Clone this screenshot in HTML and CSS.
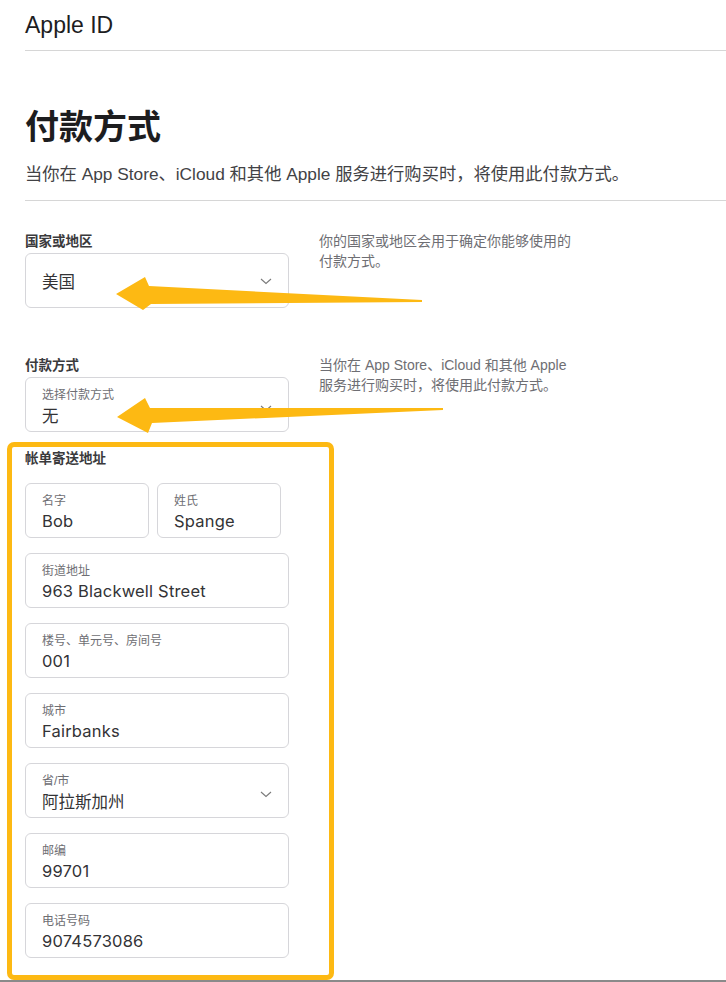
FILE: index.html
```html
<!DOCTYPE html>
<html lang="zh-CN">
<head>
<meta charset="utf-8">
<title>Apple ID - 付款方式</title>
<link rel="stylesheet" href="styles.css">
</head>
<body>
<div class="page">
  <div class="topbar">Apple ID</div>

  <div class="hero">
    <h1 class="title">付款方式</h1>
    <p class="subtitle">当你在 App Store、iCloud 和其他 Apple 服务进行购买时，将使用此付款方式。</p>
  </div>

  <div class="row row-first">
    <div class="col">
      <div class="label">国家或地区</div>
      <div class="field field-select field-plain">
        <span class="value">美国</span>
        <svg class="chev" width="12" height="7" viewBox="0 0 12 7"><path d="M1 1 L6 5.5 L11 1" fill="none" stroke="#7a7a7a" stroke-width="1.1"/></svg>
      </div>
    </div>
    <p class="desc">你的国家或地区会用于确定你能够使用的<br>付款方式。</p>
  </div>

  <div class="row row-second">
    <div class="col">
      <div class="label">付款方式</div>
      <div class="field field-select">
        <div class="stack">
          <span class="small">选择付款方式</span>
          <span class="value">无</span>
        </div>
        <svg class="chev" width="12" height="7" viewBox="0 0 12 7"><path d="M1 1 L6 5.5 L11 1" fill="none" stroke="#7a7a7a" stroke-width="1.1"/></svg>
      </div>
    </div>
    <p class="desc">当你在 App Store、iCloud 和其他 Apple<br>服务进行购买时，将使用此付款方式。</p>
  </div>

  <div class="billing">
    <div class="label label-billing">帐单寄送地址</div>
    <div class="fields">
      <div class="name-row">
        <div class="field field-half">
          <span class="small">名字</span>
          <span class="value latin">Bob</span>
        </div>
        <div class="field field-half">
          <span class="small">姓氏</span>
          <span class="value latin">Spange</span>
        </div>
      </div>
      <div class="field">
        <span class="small">街道地址</span>
        <span class="value latin">963 Blackwell Street</span>
      </div>
      <div class="field">
        <span class="small">楼号、单元号、房间号</span>
        <span class="value latin">001</span>
      </div>
      <div class="field">
        <span class="small">城市</span>
        <span class="value latin">Fairbanks</span>
      </div>
      <div class="field field-select">
        <div class="stack">
          <span class="small">省/市</span>
          <span class="value">阿拉斯加州</span>
        </div>
        <svg class="chev" width="12" height="7" viewBox="0 0 12 7"><path d="M1 1 L6 5.5 L11 1" fill="none" stroke="#7a7a7a" stroke-width="1.1"/></svg>
      </div>
      <div class="field">
        <span class="small">邮编</span>
        <span class="value latin">99701</span>
      </div>
      <div class="field">
        <span class="small">电话号码</span>
        <span class="value latin">9074573086</span>
      </div>
    </div>
  </div>

  <div class="highlight"></div>
  <svg class="arrows" width="726" height="982" viewBox="0 0 726 982">
    <polygon points="116,294 145,277 149,286 422,300 422,302 151,304 143,310" fill="#FDB913"/>
    <polygon points="117,417 145,398 150,408 443,408 443,410 152,423 148,433" fill="#FDB913"/>
  </svg>
  <div class="frame-line"></div>
</div>
</body>
</html>
```

FILE: styles.css
```css
html, body {
  margin: 0;
  padding: 0;
  background: #ffffff;
}

body {
  font-family: "Liberation Sans", "Noto Sans CJK SC", sans-serif;
  color: #1d1d1f;
}

.page {
  position: relative;
  padding-left: 25px;
  min-height: 982px;
  box-sizing: border-box;
  overflow: hidden;
}

.topbar {
  height: 50px;
  border-bottom: 1px solid #d6d6d6;
  display: flex;
  align-items: center;
  font-size: 23px;
  color: #1d1d1f;
}

.hero {
  padding-top: 54px;
  padding-bottom: 14px;
  border-bottom: 1px solid #d6d6d6;
}

.title {
  margin: 0;
  font-family: "Noto Sans CJK SC", sans-serif;
  font-size: 34px;
  line-height: 40px;
  font-weight: 700;
  color: #1d1d1f;
}

.subtitle {
  margin: 17px 0 0;
  font-size: 17.3px;
  line-height: 24px;
  color: #424245;
}

.row {
  display: grid;
  grid-template-columns: 264px 280px;
  column-gap: 30px;
  align-items: start;
}

.row-first {
  margin-top: 31px;
}

.row-second {
  margin-top: 48px;
}

.label {
  font-family: "Noto Sans CJK SC", sans-serif;
  font-size: 13.5px;
  line-height: 16px;
  font-weight: 700;
  color: #3a3a3c;
  margin-bottom: 5px;
}

.label-billing {
  margin-bottom: 0;
}

.desc {
  margin: -1px 0 0;
  font-size: 14px;
  line-height: 20px;
  color: #6e6e73;
}

.field {
  box-sizing: border-box;
  width: 264px;
  height: 55px;
  border: 1px solid #d6d6da;
  border-radius: 6px;
  padding: 10px 16px 0;
  display: flex;
  flex-direction: column;
  background: #fff;
}

.field-select {
  flex-direction: row;
  justify-content: space-between;
  align-items: flex-start;
  padding-right: 16px;
}

.field-plain {
  align-items: center;
  padding-top: 0;
}

.stack {
  display: flex;
  flex-direction: column;
}

.chev {
  margin-top: 17px;
}

.field-plain .chev {
  margin-top: 2px;
}

.small {
  font-size: 12px;
  line-height: 14px;
  color: #6e6e73;
}

.value {
  font-family: "Noto Sans CJK SC", sans-serif;
  font-size: 16.5px;
  line-height: 20px;
  margin-top: 3px;
  color: #333336;
}

.field-plain .value {
  margin-top: 0;
}

.value.latin {
  font-family: "Inter", "Noto Sans CJK SC", sans-serif;
  font-size: 16.5px;
  letter-spacing: 0.2px;
}

.billing {
  margin-top: 17px;
}

.fields {
  margin-top: 18px;
  display: flex;
  flex-direction: column;
  gap: 15px;
}

.name-row {
  display: flex;
  gap: 8px;
}

.field-half {
  width: 124px;
}

.highlight {
  position: absolute;
  left: 7px;
  top: 442px;
  width: 327px;
  height: 538px;
  box-sizing: border-box;
  border: 5px solid #FDB913;
  border-radius: 7px;
  z-index: 2;
  pointer-events: none;
}

.arrows {
  position: absolute;
  left: 0;
  top: 0;
  z-index: 3;
  pointer-events: none;
}

.frame-line {
  position: absolute;
  left: 0;
  right: 0;
  top: 980px;
  height: 2px;
  background: #8a8a8a;
  z-index: 1;
}
```
